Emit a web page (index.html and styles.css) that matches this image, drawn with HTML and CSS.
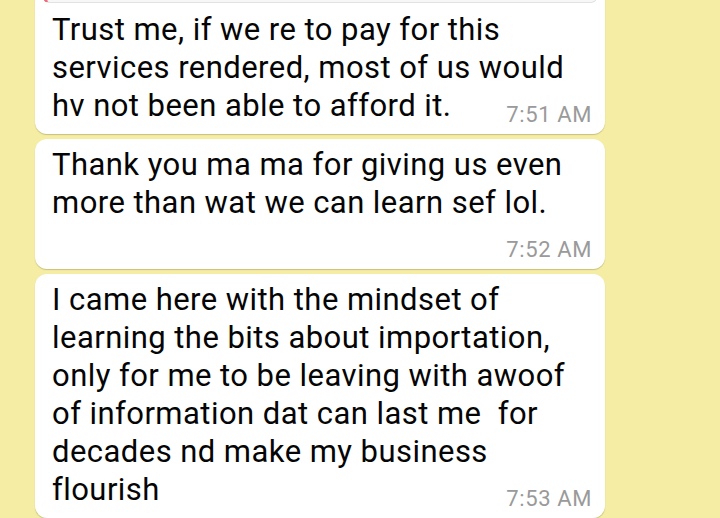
FILE: index.html
```html
<!DOCTYPE html>
<html lang="en">
<head>
    <meta charset="UTF-8">
    <meta name="viewport" content="width=device-width, initial-scale=1.0">
    <title>Chat</title>
    <link rel="stylesheet" href="styles.css">
</head>
<body>
    <div class="chat">
        <div class="bubble">
            <div class="quote"></div>
            <p class="msg">Trust me, if we re to pay for this services rendered, most of us would hv not been able to afford it.<span class="time">7:51 AM</span></p>
        </div>

        <div class="bubble">
            <p class="msg">Thank you ma ma for giving us even more than wat we can learn sef lol.<span class="time">7:52 AM</span></p>
        </div>

        <div class="bubble">
            <p class="msg">I came here with the mindset of learning the bits about importation, only for me to be leaving with awoof of information dat can last me&nbsp; for decades nd make my business flourish<span class="time">7:53 AM</span></p>
        </div>
    </div>
</body>
</html>
```

FILE: styles.css
```css
:root {
    --paper: #f6eda5;
    --bubble: #ffffff;
    --ink: #050505;
    --muted: #9a9a9a;
    --accent: #ee6a78;
}

body {
    margin: 0;
    padding: 0;
    height: 100vh;
    overflow: hidden;
    background: var(--paper);
    font-family: Roboto, "Noto Sans", sans-serif;
    color: var(--ink);
}

.chat {
    display: flex;
    flex-direction: column;
    gap: 5px;
    width: 570px;
    margin: -63px 0 0 35px;
}

.bubble {
    background: var(--bubble);
    border-radius: 12px;
    padding: 7px 8px 6px;
    box-shadow: 0 1px 1px rgba(120, 110, 40, 0.35);
}

.bubble:first-child {
    padding-top: 6px;
}

.quote {
    height: 60px;
    margin-bottom: 8px;
    background: #f7f7f7;
    border: 1px solid #e2e2e2;
    border-left: 4px solid var(--accent);
    border-radius: 6px;
    box-sizing: border-box;
}

.msg {
    display: flow-root;
    margin: 0;
    padding: 0 5px 0 9px;
    font-size: 31px;
    line-height: 38px;
    letter-spacing: 0.45px;
}

.time {
    float: right;
    margin: 15px 0 0 20px;
    font-size: 22px;
    line-height: 26px;
    letter-spacing: 0.6px;
    color: var(--muted);
}
```
